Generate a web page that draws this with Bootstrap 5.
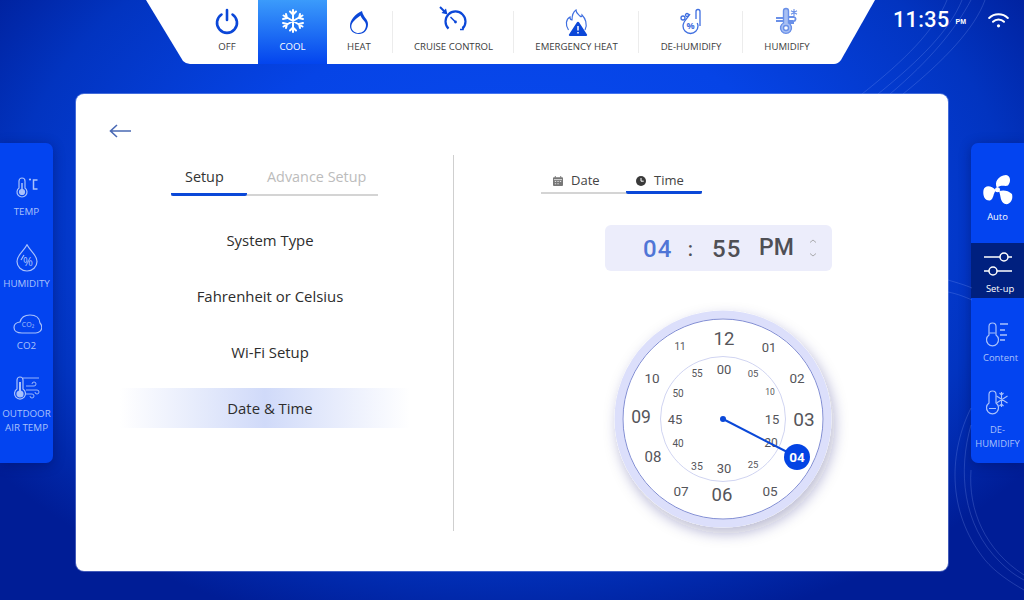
<!DOCTYPE html>
<html lang="en">
<head>
<meta charset="utf-8">
<title>Thermostat</title>
<link href="https://cdn.jsdelivr.net/npm/bootstrap@5.3.0/dist/css/bootstrap.min.css" rel="stylesheet">
<style>
html,body{height:100%;margin:0}
body{width:1024px;height:600px;overflow:hidden;position:relative;font-family:"Open Sans","Noto Sans",sans-serif;color:#333;
background:radial-gradient(ellipse 640px 430px at 50% 36%,#0a4bf0 0%,#0644e6 45%,#0234c0 78%,#001d96 100%),#001a8e;background-color:#001a8e}
.bg-arcs{position:absolute;left:0;top:0;pointer-events:none}
.stage{position:relative;width:1024px;height:600px}
.top-row{height:64px}
.mode-bar{width:729px;margin-left:146px;height:64px;background:#fff;padding-left:50px;
clip-path:path("M0 0H729L695 60Q692 64 688 64H44Q40 64 37 61Z")}
.mode{height:64px;flex:none;font-size:9.6px;color:#3c3c3c;padding-top:6px;position:relative}
.mode svg{height:30px;width:32px;display:block}
.mode span{margin-top:5px;line-height:12px;white-space:nowrap}
.mode.on{background:linear-gradient(#3b9bfb,#0344ee);color:#fff}
.mode.sep::after{content:"";position:absolute;right:0;top:11px;bottom:11px;width:1px;background:#ececec}
.m1{width:62px}.m2{width:69px}.m3{width:66px;padding-right:2px}.m4{width:121px}.m5{width:125px}.m6{width:104px}.m7{width:88px}
.clock-now{margin-left:18px;color:#fff;width:116px;height:40px}
.clock-now b{font:500 21.5px/1 Roboto,sans-serif;letter-spacing:.4px}
.clock-now i{font:700 7px/1 "Liberation Sans",sans-serif;font-style:normal;margin-left:6px;margin-top:3px}
.side{width:53px;height:320px;margin-top:79px;background:#0344f0;box-shadow:0 2px 12px rgba(0,15,90,.45);flex:none}
.side.lft{border-radius:0 7px 7px 0;padding-top:30px}
.side.rgt{border-radius:7px 0 0 7px;padding-top:30px;overflow:hidden}
.tile{font-size:9.8px;line-height:14px;color:#a9c1fb;text-align:center;white-space:nowrap}
.rgt .tile{font-size:9.4px}
.tile svg{display:block;width:30px;height:28px;flex:none}
.lft .tile:nth-child(1){height:71px}
.lft .tile:nth-child(1) svg{margin-bottom:4px}
.lft .tile:nth-child(2){height:66px}
.lft .tile:nth-child(2) svg{margin-bottom:5px}
.lft .tile:nth-child(3){height:64px}
.lft .tile:nth-child(3) svg{margin-bottom:1px}
.lft .tile:nth-child(4) svg{margin-bottom:5px}
.rgt .t1{height:70px;color:#fff}
.rgt .t1 svg{width:34px;height:34px;margin-bottom:3px}
.rgt .t2{background:#00207f;color:#fff;height:55px;padding-top:7px}
.rgt .t2 svg{margin-bottom:4px}
.rgt .t2 .lbl{padding-left:5px}
.rgt .t3{height:90px;padding-top:22px}
.rgt .t3 svg{margin-bottom:3px}
.rgt .t3 .lbl{padding-left:6px}
.rgt .t4{height:70px}
.rgt .t4 svg{margin-bottom:7px}
.panel{width:872px;height:477px;margin-top:30px;background:#fff;border-radius:8px;flex:none;margin-left:23px;margin-right:23px;box-shadow:0 0 0 1px rgba(190,205,250,.35)}
.arrow-back{padding:23px 0 0 32px;height:61px}
.panel-body{height:376px}
.col-left{width:378px;border-right:1px solid #cfcfcf;flex:none}
.tabline{border-bottom:2px solid #d4d4d4;line-height:20px}
.tab-a,.tab-b{padding-bottom:6px;margin-bottom:-2px;white-space:nowrap;border-bottom:3px solid transparent}
.tab-a.act,.tab-b.act{border-bottom-color:#0a48d8;border-radius:2px}
.tabs-setup{width:207px;margin-left:95px;margin-top:12px;font-size:14.4px}
.tabs-setup .tab-a{width:76px;padding-left:14px}
.tabs-setup .tab-b{flex:1;color:#bcbcbc;padding-left:20px}
.menu-list{margin-top:24px;padding-left:44px}
.menu-item{width:290px;height:40px;margin-bottom:16px;font-size:14.9px;line-height:40px;text-align:center;color:#2d2d2d;padding-left:10px}
.menu-item.sel{background:linear-gradient(90deg,rgba(205,215,250,0),#d0daf9 50%,rgba(205,215,250,0))}
.col-right{padding-left:87px}
.tabs-dt{width:161px;margin-top:16px;font-size:13px;line-height:18px}
.tabs-dt .tab-a{width:85px;padding:0 0 2px 12px;color:#444}
.tabs-dt .tab-b{color:#444;padding:0 0 2px 10px;flex:1}
.tabs-dt svg{width:10px;height:10px;margin-right:8px;vertical-align:-.5px}
.time-box{width:227px;height:46px;margin:31px 0 0 64px;background:#ecedfb;border-radius:6px;font-family:Roboto,sans-serif;font-weight:500;font-size:24px;letter-spacing:1.2px;color:#4f4f55;position:relative;padding:1px 0 0 38px}
.time-box .hh{color:#4f75d6;width:37px}
.time-box .cc{width:22px;font-size:20px;text-align:center}
.time-box .mm{width:37px;margin-left:10px}
.time-box .ap{margin-left:10px;letter-spacing:0;font-size:23px}
.time-box svg{position:absolute;right:15px;top:13px;width:8px;height:20px}
.dial{display:block;margin:24px 0 0 49px}
.dial text{font-family:Roboto,sans-serif;fill:#55555a;text-anchor:middle;dominant-baseline:central}
</style>
</head>
<body>
<div class="stage">
<svg class="bg-arcs" width="1024" height="600" fill="none" stroke="#9db6ff" stroke-opacity=".3" stroke-width=".7">
<path d="M862 94C905 60 935 30 947 0"/><path d="M878 94C920 60 950 30 962 0"/><path d="M890 94C930 60 955 30 971 0"/><path d="M903 94C945 60 975 28 985 0"/>
<path d="M948 280C958 283 965 285 972 288"/><path d="M948 292C958 294 965 297 972 300"/>
<path d="M971 408C950 450 945 510 985 560C995 572 1010 582 1024 590"/><path d="M971 425C958 470 962 525 1000 562C1008 570 1016 576 1024 580"/><path d="M971 470C968 510 985 550 1024 575"/>
</svg>
<div class="top-row d-flex position-relative">
  <nav class="mode-bar d-flex">
    <div class="mode m1 d-flex flex-column align-items-center"><svg viewBox="0 0 32 30"><path d="M10.5 8.500a10 10 0 1 0 11 0M16 4V14" fill="none" stroke="#0b47d8" stroke-width="2.600" stroke-linecap="round"/></svg><span>OFF</span></div>
    <div class="mode m2 on d-flex flex-column align-items-center"><svg viewBox="0 0 32 30" fill="none" stroke="#fff" stroke-width="2" stroke-linecap="round"><path d="M16 4v22M6.500 9.500l19 11M25.500 9.500l-19 11M13 5.500l3 3 3-3M13 24.500l3-3 3 3M6 13l4-1-1-4M26 17l-4 1 1 4M26 13l-4-1 1-4M6 17l4 1-1 4"/></svg><span>COOL</span></div>
    <div class="mode m3 sep d-flex flex-column align-items-center"><svg viewBox="0 0 32 30"><path d="M19 5C12 8 7 14 7 20 7 25 11 28 16 28 21 28 25 24 25 18 25 13 20 11 19 5z" fill="#0b47d8"/><path d="M17.500 9.500C13 13 8.300 16 8.300 20.500 8.300 24.500 12 27 15.500 27 19.500 27 23 24 23 19 23 15 19 14 17.500 9.500z" fill="#fff"/></svg><span>HEAT</span></div>
    <div class="mode m4 sep d-flex flex-column align-items-center"><svg viewBox="0 0 32 30" fill="none" stroke="#0b47d8" stroke-width="2"><path d="M10.500 22.600a10 10 0 1 1 14 0" stroke-width="2.200"/><path d="M17.500 16l-5-5" stroke-width="1.500"/><circle cx="17.500" cy="16" r="1.400" fill="#0b47d8" stroke="none"/><path d="M2 1l5 5" /><path d="M9.500 8.500L3.500 7 8 2.500z" fill="#0b47d8" stroke="none"/><path d="M22 23.500h3v-3" stroke-width="1.500"/></svg><span>CRUISE CONTROL</span></div>
    <div class="mode m5 sep d-flex flex-column align-items-center"><svg viewBox="0 0 32 30"><path d="M7.500 24C4 19 5 13 9 11c0 2 1 3 2 3 0-4 1-8 4-10 0 3 2 4 4 6 1 1 2 1 2-1 3 3 6 9 3 15" fill="none" stroke="#3f6fe0" stroke-width="1.200"/><path d="M15.800 16.500a1.400 1.400 0 0 1 2.400 0l7.800 12a1 1 0 0 1-1 1.500H9a1 1 0 0 1-1-1.500z" fill="#0b47d8"/><path d="M17 20v4.500M17 26v1.600" stroke="#fff" stroke-width="1.500"/></svg><span>EMERGENCY HEAT</span></div>
    <div class="mode m6 sep d-flex flex-column align-items-center"><svg viewBox="0 0 32 30" fill="none" stroke="#3f6fe0" stroke-width="1.300"><path d="M15 8c-2 4-7 7-7 12a7.500 7.500 0 0 0 15 0c0-1-.3-2-.8-3"/><path d="M21 13V5.500a2 2 0 0 1 4 0V20"/><text x="15.500" y="23" font-size="9" font-weight="700" fill="#3f6fe0" stroke="none" text-anchor="middle" font-family="Open Sans,sans-serif">%</text><circle cx="8" cy="12" r="2"/><circle cx="12" cy="9" r="1.500"/></svg><span>DE-HUMIDIFY</span></div>
    <div class="mode m7 d-flex flex-column align-items-center"><svg viewBox="0 0 32 30" fill="none" stroke="#6a90e8" stroke-width="1.400"><path d="M12.500 17V5a2.500 2.500 0 0 1 5 0v12a5.500 5.500 0 1 1-5 0z" fill="#a8c0f3"/><circle cx="15" cy="22" r="2.500" fill="#fff"/><path d="M5 12h7M5 15h7M18 11h5a2 2 0 1 1-1 4h-4M18 17h5" stroke-width="1.800"/><path d="M23 3v7M20 4.800l6 3.400M26 4.800l-6 3.400" stroke-width="1.100"/></svg><span>HUMIDIFY</span></div>
  </nav>
  <div class="clock-now d-flex align-items-center">
    <b>11:35</b><i>PM</i>
    <svg class="ms-auto" width="21" height="15" viewBox="0 0 21 15" fill="none" stroke="#fff" stroke-linecap="round"><path d="M1.200 5c5-5 13.600-5 18.600 0" stroke-width="2"/><path d="M5 8.800c3-3 8-3 11 0" stroke-width="2"/><circle cx="10.500" cy="12.800" r="1.600" fill="#fff" stroke="none"/></svg>
  </div>
</div>
<div class="d-flex align-items-start">
  <aside class="side lft d-flex flex-column">
    <div class="tile d-flex flex-column align-items-center"><svg viewBox="0 0 30 28" fill="none" stroke="#a9c1fb" stroke-width="1.200"><path d="M7 15V8a3 3 0 0 1 6 0v7a5 5 0 1 1-6 0z"/><circle cx="10" cy="19" r="2.500" fill="#a9c1fb"/><path d="M10 10v8" stroke-width="1.500"/><path d="M25.500 7h-4v9h4" stroke-width="1.500"/><circle cx="18" cy="6.500" r="1.100" fill="#a9c1fb" stroke="none"/></svg>TEMP</div>
    <div class="tile d-flex flex-column align-items-center"><svg viewBox="0 0 30 28" fill="none" stroke="#a9c1fb" stroke-width="1.200"><path d="M15 .8c3 6 10 10 10 16.700a10 9.500 0 0 1-20 0C5 10.800 12 6.800 15 .8z"/><path d="M9 16l3-5"/><text x="16" y="22" font-size="12" font-weight="400" fill="#a9c1fb" stroke="none" text-anchor="middle" font-family="Open Sans,sans-serif">%</text></svg>HUMIDITY</div>
    <div class="tile d-flex flex-column align-items-center"><svg viewBox="0 0 30 28" fill="none" stroke="#a9c1fb" stroke-width="1.200"><path d="M10 23c-5 0-8-2-8-5.500 0-3 2.500-5 6-5.500 1-4 4.500-7 10-7 6 0 9.500 3 10 8 1.500 1.500 1.800 3 1.800 4.500 0 3-3 5.500-6 5.500z"/><text x="16" y="17" font-size="7" fill="#a9c1fb" stroke="none" text-anchor="middle" font-family="Open Sans,sans-serif">CO₂</text></svg>CO2</div>
    <div class="tile d-flex flex-column align-items-center"><svg viewBox="0 0 30 28" fill="none" stroke="#a9c1fb" stroke-width="1.200"><path d="M5 15V6a3 3 0 0 1 6 0v9a5.500 5.500 0 1 1-6 0z"/><circle cx="8" cy="20" r="3" fill="#a9c1fb"/><path d="M8 8v11" stroke-width="2"/><path d="M11 4h16M14 12h8a2 2 0 1 0-2-2M14 16h11a2 2 0 1 1-2 2M14 20h6a2 2 0 1 1-2 2" stroke-width=".9"/></svg>OUTDOOR<br>AIR TEMP</div>
  </aside>
  <main class="panel">
    <div class="arrow-back"><svg width="24" height="14" viewBox="0 0 24 14" fill="none" stroke="#4a69b4" stroke-width="1.600"><path d="M22 7H2M8 1L1.500 7 8 13" transform="translate(1 0)"/></svg></div>
    <div class="panel-body d-flex">
      <section class="col-left">
        <div class="tabs-setup tabline d-flex"><div class="tab-a act">Setup</div><div class="tab-b">Advance Setup</div></div>
        <div class="menu-list">
          <div class="menu-item">System Type</div>
          <div class="menu-item">Fahrenheit or Celsius</div>
          <div class="menu-item">Wi-Fi Setup</div>
          <div class="menu-item sel">Date &amp; Time</div>
        </div>
      </section>
      <section class="col-right">
        <div class="tabs-dt tabline d-flex">
          <div class="tab-a"><svg viewBox="0 0 11 11"><path d="M1 1.500h9a1 1 0 0 1 1 1V10a1 1 0 0 1-1 1H1a1 1 0 0 1-1-1V2.500a1 1 0 0 1 1-1z" fill="#777"/><path d="M2 0h1v2H2zM8 0h1v2H8z" fill="#777"/><path d="M1 4h9" stroke="#fff" stroke-width=".8"/><path d="M2 5.500h1.500v1.200H2zM4.800 5.500h1.500v1.200H4.800zM7.500 5.500H9v1.200H7.500zM2 8h1.500v1.200H2zM4.800 8h1.500v1.200H4.800z" fill="#ddd"/></svg>Date</div>
          <div class="tab-b act"><svg viewBox="0 0 11 11"><circle cx="5.500" cy="5.500" r="5.500" fill="#3a3a3a"/><path d="M5.500 2.200v3.500H8.500" fill="none" stroke="#fff" stroke-width="1.100"/></svg>Time</div>
        </div>
        <div class="time-box d-flex align-items-center">
          <span class="hh">04</span><span class="cc">:</span><span class="mm">55</span><span class="ap">PM</span>
          <svg viewBox="0 0 8 20" fill="none" stroke="#999" stroke-width=".8"><path d="M1 4.500L4 2l3 2.500M1 15.500L4 18l3-2.500"/></svg>
        </div>
        <svg class="dial" width="260" height="257" viewBox="590 295 260 257">
          <defs><filter id="sh" x="-30%" y="-30%" width="160%" height="160%"><feDropShadow dx="3" dy="6" stdDeviation="7" flood-color="#1a2370" flood-opacity=".3"/></filter></defs>
          <circle cx="723" cy="419" r="108.500" fill="#fff" filter="url(#sh)"/>
          <circle cx="723" cy="419" r="104.500" fill="none" stroke="#dcdffb" stroke-width="8"/>
          <circle cx="723" cy="419" r="100" fill="none" stroke="#5f6fc8" stroke-width=".8"/>
          <circle cx="723" cy="419" r="62.500" fill="none" stroke="#c4c9ee" stroke-width=".8"/>
          <text x="724" y="339" font-size="18.500">12</text><text x="769" y="347" font-size="13">01</text><text x="797" y="378" font-size="13.500">02</text><text x="804" y="419" font-size="19">03</text><text x="770" y="491" font-size="13.500">05</text><text x="722" y="495" font-size="18.500">06</text><text x="681" y="491" font-size="13.500">07</text><text x="653" y="457" font-size="15">08</text><text x="641" y="417" font-size="17.500">09</text><text x="652" y="378" font-size="13.500">10</text><text x="680" y="346" font-size="10">11</text>
          <text x="724" y="369" font-size="13">00</text><text x="753" y="373" font-size="9.500">05</text><text x="770" y="392" font-size="8.500">10</text><text x="772" y="419" font-size="13">15</text><text x="771" y="443" font-size="12">20</text><text x="753" y="464" font-size="9.500">25</text><text x="724" y="468" font-size="13">30</text><text x="697" y="466" font-size="10.500">35</text><text x="678" y="443" font-size="10">40</text><text x="675" y="419" font-size="13">45</text><text x="678" y="393" font-size="10">50</text><text x="697" y="373" font-size="10">55</text>
          <path d="M723 419L797 457" stroke="#0a48d8" stroke-width="2"/><circle cx="723" cy="419" r="3" fill="#0a48d8"/>
          <circle cx="797" cy="457" r="13" fill="#0344e4"/>
          <text x="797" y="457" font-size="13.500" font-weight="700" style="fill:#fff">04</text>
        </svg>
      </section>
    </div>
  </main>
  <aside class="side rgt d-flex flex-column">
    <div class="tile t1 d-flex flex-column align-items-center"><svg viewBox="0 0 34 34" fill="#fff"><path d="M16 15C13 9 17 3 25 2 30 3 30 9 27 12.500 24 14 20 11 16 15z"/><path d="M15 17.500C10 12 4 12 2.500 17 1.500 23 4 28 9 27.500 13 26 12 20 15 17.500z"/><path d="M18 18C22 17 27 17 31 21 32.500 27 29 32 24 31 19 29 20 23 18 18z"/><circle cx="16.500" cy="16.800" r="2.500"/></svg>Auto</div>
    <div class="tile t2 d-flex flex-column align-items-center"><svg viewBox="0 0 30 28" fill="none" stroke="#fff" stroke-width="1.500"><path d="M1 7h16M25 7h4M1 21h5M14 21h15"/><circle cx="21" cy="7" r="4"/><circle cx="10" cy="21" r="4"/></svg><span class="lbl">Set-up</span></div>
    <div class="tile t3 d-flex flex-column align-items-center"><svg viewBox="0 0 30 28" fill="none" stroke="#a9c1fb" stroke-width="1.200"><path d="M6 15V6.500a3.500 3.500 0 0 1 7 0V15a6 6 0 1 1-7 0z"/><path d="M6.500 13h6"/><path d="M17 4h8M17 10h5M17 15h7M17 20h5" stroke-width="1.300"/></svg><span class="lbl">Content</span></div>
    <div class="tile t4 d-flex flex-column align-items-center"><svg viewBox="0 0 30 28" fill="none" stroke="#a9c1fb" stroke-width="1.200"><path d="M6 15V6.500a3.500 3.500 0 0 1 7 0V15a6 6 0 1 1-7 0z"/><path d="M6 20.500h7"/><path d="M18.500 4v15M13.500 8l11 7M24.500 8l-11 7M16.500 5l2 2 2-2M16.500 18l2-2 2 2" stroke-width="1.100"/></svg>DE-<br>HUMIDIFY</div>
  </aside>
</div>
</div>
<script src="https://cdn.jsdelivr.net/npm/bootstrap@5.3.0/dist/js/bootstrap.bundle.min.js"></script>
</body>
</html>
